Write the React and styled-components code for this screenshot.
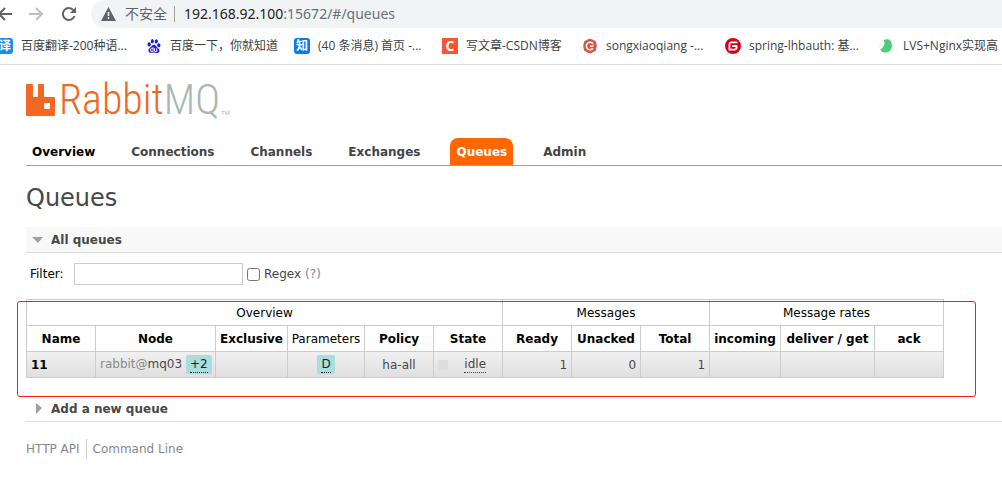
import React from 'react'
import styled, { createGlobalStyle } from 'styled-components'
import { SiBaidu, SiGitee } from 'react-icons/si'

const bookmarks = [
  { icon: 'fanyi', text: '百度翻译-200种语...', width: 149 },
  { icon: 'baidu', text: '百度一下，你就知道', width: 148 },
  { icon: 'zhihu', text: '(40 条消息) 首页 -...', width: 148 },
  { icon: 'csdn', text: '写文章-CSDN博客', width: 140 },
  { icon: 'song', text: 'songxiaoqiang -...', width: 143 },
  { icon: 'gitee', text: 'spring-lhbauth: 基...', width: 154 },
  { icon: 'leaf', text: 'LVS+Nginx实现高', width: 124 },
]

const tabs = ['Overview', 'Connections', 'Channels', 'Exchanges', 'Queues', 'Admin']

const columns = [
  { name: 'Name', width: 69 },
  { name: 'Node', width: 120 },
  { name: 'Exclusive', width: 72 },
  { name: 'Parameters', width: 77, plain: true },
  { name: 'Policy', width: 69 },
  { name: 'State', width: 69 },
  { name: 'Ready', width: 69 },
  { name: 'Unacked', width: 69 },
  { name: 'Total', width: 69 },
  { name: 'incoming', width: 71 },
  { name: 'deliver / get', width: 94 },
  { name: 'ack', width: 69 },
]

const BookmarkIcon = ({ name }) => {
  if (name === 'fanyi') return <Badge $bg="#1b8cf5">译</Badge>
  if (name === 'zhihu') return <Badge $bg="#0a78fa">知</Badge>
  if (name === 'csdn') return <Badge $bg="#fc5531" $square>C</Badge>
  if (name === 'baidu') return <SiBaidu size={14} color="#2319dc" />
  if (name === 'gitee') return <SiGitee size={16} color="#d0021b" />
  if (name === 'song') return (
    <svg width="16" height="16" viewBox="0 0 16 16">
      <path d="M8 .5l3 1.300 3 1.700.8 4.500-.8 4.500-3 1.700-3 1.300-3-1.300-3-1.700L1.200 8 2 3.500l3-1.700z" fill="#dd5540" />
      <path d="M11 5.800A3.700 3.700 0 1 0 11 10.200M8 8h3.500" fill="none" stroke="#fff" strokeWidth="1.500" />
    </svg>
  )
  return (
    <svg width="16" height="16" viewBox="0 0 16 16">
      <circle cx="8" cy="8" r="8" fill="#eefaf2" />
      <path d="M5 2C9 .500 11.500 1.500 12.500 5c1.500 4.500-1 9.500-6 9.500C4 14.500 1.800 13.200 1.500 11.500 3 10.500 4.500 9 5.500 6.500 6 5 5 3.500 5 2z" fill="#4ccb78" />
    </svg>
  )
}

const Logo = () => (
  <LogoLink href="#/" aria-label="RabbitMQ">
    <svg width="29" height="32" viewBox="0 0 29 32">
      <path fillRule="evenodd" fill="#f26822" d="M1 0h5q1 0 1 1v11q0 1 1 1h3q1 0 1-1V1q0-1 1-1h4q1 0 1 1v11q0 1 1 1h9q1 0 1 1v17q0 1-1 1H1q-1 0-1-1V1q0-1 1-1zM19 19q-1 0-1 1v4q0 1 1 1h4q1 0 1-1v-4q0-1-1-1z" />
    </svg>
    <LogoText>Rabbit<LogoGrey>MQ</LogoGrey></LogoText>
    <Trademark>TM</Trademark>
  </LogoLink>
)

const App = () => {
  return (
    <>
      <GlobalStyle />
      <Toolbar>
        <ToolButton aria-label="Back">
          <svg width="16" height="16" viewBox="0 0 16 16"><path d="M15 8H3M8 2L2 8l6 6" fill="none" stroke="#5f6368" strokeWidth="2" /></svg>
        </ToolButton>
        <ToolButton aria-label="Forward">
          <svg width="16" height="16" viewBox="0 0 16 16"><path d="M1 8h12M8 2l6 6-6 6" fill="none" stroke="#bdbfc1" strokeWidth="2" /></svg>
        </ToolButton>
        <ToolButton aria-label="Reload">
          <svg width="16" height="16" viewBox="0 0 16 16"><path d="M13.500 10A6 6 0 1 1 12.500 4.200" fill="none" stroke="#5f6368" strokeWidth="2" /><path d="M15 1v6H9z" fill="#5f6368" /></svg>
        </ToolButton>
        <Address>
          <svg width="15" height="14" viewBox="0 0 15 14"><path d="M7.500 0L15 14H0zM6.700 5v4h1.600V5zM6.700 10.300v1.600h1.600v-1.600z" fill="#5f6368" fillRule="evenodd" /></svg>
          <Insecure>不安全</Insecure>
          <Url>192.168.92.100<UrlRest>:15672/#/queues</UrlRest></Url>
        </Address>
      </Toolbar>
      <Bookmarks>
        {bookmarks.map((b) => (
          <Bookmark key={b.text} href="#" $width={b.width}>
            <IconSlot><BookmarkIcon name={b.icon} /></IconSlot>
            {b.text}
          </Bookmark>
        ))}
      </Bookmarks>

      <Page>
        <Logo />
        <Nav>
          {tabs.map((tab) => (
            <Tab key={tab} href="#" $active={tab === 'Queues'} $dark={tab === 'Overview'}>{tab}</Tab>
          ))}
        </Nav>
        <Title>Queues</Title>

        <SectionHeader $open>
          <Arrow $open />All queues
        </SectionHeader>
        <Filter>
          <FilterLabel htmlFor="filter">Filter:</FilterLabel>
          <FilterInput id="filter" type="text" />
          <Checkbox id="regex" type="checkbox" />
          <RegexLabel htmlFor="regex">Regex</RegexLabel>
          <Help href="#">(?)</Help>
        </Filter>

        <TableArea>
          <Table>
            <colgroup>
              {columns.map((c) => <Col key={c.name} $width={c.width} />)}
            </colgroup>
            <thead>
              <tr>
                <Th colSpan="6" $plain>Overview</Th>
                <Th colSpan="3" $plain>Messages</Th>
                <Th colSpan="3" $plain>Message rates</Th>
              </tr>
              <tr>
                {columns.map((c) => <Th key={c.name} $plain={c.plain}>{c.name}</Th>)}
              </tr>
            </thead>
            <tbody>
              <Row>
                <Td><QueueLink href="#">11</QueueLink></Td>
                <Td><Faint>rabbit@</Faint>mq03 <Tag><abbr>+2</abbr></Tag></Td>
                <Td />
                <Td $align="center"><Tag><abbr>D</abbr></Tag></Td>
                <Td $align="center">ha-all</Td>
                <Td><State><StateBox /><abbr>idle</abbr></State></Td>
                <Td $align="right">1</Td>
                <Td $align="right">0</Td>
                <Td $align="right">1</Td>
                <Td />
                <Td />
                <Td />
              </Row>
            </tbody>
          </Table>
          <Highlight />
        </TableArea>

        <SectionHeader>
          <Arrow />Add a new queue
        </SectionHeader>
        <Footer>
          <FooterLink href="#">HTTP API</FooterLink>
          <FooterLink href="#">Command Line</FooterLink>
        </Footer>
      </Page>
    </>
  )
}

const GlobalStyle = createGlobalStyle`
  * {
    box-sizing: border-box;
  }
  body {
    margin: 0;
    background: #fff;
    color: #484848;
    font: 12px/16px Verdana, "DejaVu Sans", sans-serif;
  }
  a {
    text-decoration: none;
  }
`;

const Toolbar = styled.div`
  display: flex;
  align-items: center;
  height: 28px;
  font-family: "Noto Sans", "Noto Sans CJK SC", sans-serif;
`;

const ToolButton = styled.button`
  display: flex;
  flex: none;
  justify-content: center;
  width: 32px;
  padding: 0;
  border: 0;
  background: none;
  &:first-child {
    width: 22px;
    justify-content: flex-start;
    margin-left: -3px;
  }
  &:nth-child(2) {
    width: 34px;
  }
`;

const Address = styled.div`
  display: flex;
  flex: 1;
  align-items: center;
  height: 28px;
  margin-left: 6px;
  padding-left: 10px;
  border-radius: 14px 0 0 14px;
  background: #f1f3f4;
`;

const Insecure = styled.span`
  margin-left: 9px;
  padding-right: 7px;
  border-right: 1px solid #9aa0a6;
  color: #5f6368;
  font-size: 14px;
  line-height: 16px;
`;

const Url = styled.span`
  margin-left: 9px;
  color: #202124;
  font: 14px/20px "Noto Sans", sans-serif;
`;

const UrlRest = styled.span`
  color: #6b6f73;
`;

const Bookmarks = styled.div`
  display: flex;
  align-items: center;
  height: 37px;
  border-bottom: 1px solid #dadce0;
  font-family: "Open Sans", "Noto Sans CJK SC", sans-serif;
`;

const Bookmark = styled.a`
  display: flex;
  flex: none;
  align-items: center;
  gap: 8px;
  width: ${(p) => p.$width}px;
  color: #3c4043;
  font-size: 12px;
  white-space: nowrap;
  &:first-child {
    margin-left: -3px;
  }
`;

const IconSlot = styled.span`
  display: flex;
  flex: none;
  align-items: center;
  justify-content: center;
  width: 16px;
  height: 16px;
`;

const Badge = styled.span`
  width: 16px;
  height: 16px;
  border-radius: ${(p) => (p.$square ? 0 : 3)}px;
  background: ${(p) => p.$bg};
  color: #fff;
  font-size: ${(p) => (p.$square ? 14 : 12)}px;
  font-weight: bold;
  line-height: 16px;
  text-align: center;
`;

const Page = styled.main`
  padding: 18px 0 0 26px;
`;

const LogoLink = styled.a`
  display: flex;
  align-items: center;
  height: 34px;
`;

const LogoText = styled.span`
  margin-left: 4px;
  color: #f26822;
  font: 300 42px/34px "Roboto Condensed", "Open Sans Condensed", Roboto, sans-serif;
`;

const LogoGrey = styled.span`
  color: #a9b7b1;
`;

const Trademark = styled.span`
  align-self: flex-end;
  margin-left: 1px;
  color: #a9b7b1;
  font: 6px/8px "Liberation Sans", sans-serif;
`;

const Nav = styled.nav`
  display: flex;
  gap: 24px;
  margin-top: 21px;
  border-bottom: 1px solid #ff8c00;
`;

const Tab = styled.a`
  padding: 6px 6px 5px;
  border-radius: 8px 8px 0 0;
  background: ${(p) => (p.$active ? '#ff6600' : 'transparent')};
  color: ${(p) => (p.$active ? '#fff' : p.$dark ? '#000' : '#444')};
  font-weight: bold;
`;

const Title = styled.h1`
  margin: 16px 0 13px;
  font-size: 24px;
  font-weight: normal;
  line-height: 32px;
`;

const SectionHeader = styled.h2`
  display: flex;
  align-items: center;
  gap: 8px;
  height: 26px;
  margin: 0;
  padding-left: 6px;
  border-bottom: 1px solid #ddd;
  background: ${(p) => (p.$open ? '#f8f8f8' : '#fff')};
  font-size: 12px;
`;

const Arrow = styled.span`
  width: 11px;
  height: 11px;
  background: #a0a0a0;
  clip-path: ${(p) => (p.$open ? 'polygon(0 3px, 11px 3px, 6px 9px)' : 'polygon(4px 0, 10px 5px, 4px 11px)')};
`;

const Filter = styled.div`
  display: flex;
  align-items: center;
  margin: 10px 0 14px;
  padding-left: 4px;
`;

const FilterLabel = styled.label`
  width: 44px;
  color: #000;
`;

const FilterInput = styled.input`
  width: 169px;
  height: 22px;
  border: 1px solid #ccc;
`;

const Checkbox = styled.input`
  width: 13px;
  height: 13px;
  margin: 0 4px;
`;

const RegexLabel = styled.label`
  margin-right: 4px;
`;

const Help = styled.a`
  color: #888;
`;

const TableArea = styled.div`
  position: relative;
  padding-bottom: 18px;
`;

const Table = styled.table`
  width: 918px;
  table-layout: fixed;
  border-collapse: collapse;
`;

const Col = styled.col`
  width: ${(p) => p.$width}px;
`;

const Th = styled.th`
  height: 26px;
  padding: 0;
  border: 1px solid #ccc;
  color: #000;
  font-weight: ${(p) => (p.$plain ? 'normal' : 'bold')};
  white-space: nowrap;
`;

const Row = styled.tr`
  background: linear-gradient(#f0f0f0, #dfdfdf);
`;

const Td = styled.td`
  height: 26px;
  padding: 0 4px;
  border: 1px solid #ccc;
  text-align: ${(p) => p.$align || 'left'};
  white-space: nowrap;
`;

const QueueLink = styled.a`
  color: #000;
  font-weight: bold;
`;

const Faint = styled.span`
  color: #888;
`;

const Tag = styled.span`
  display: inline-block;
  padding: 2px 4px 1px;
  border-radius: 2px;
  background: #aadddd;
  color: #222;
  line-height: 15px;
  abbr {
    display: block;
    border-bottom: 1px dotted #222;
  }
`;

const State = styled.div`
  display: flex;
  align-items: center;
  justify-content: space-between;
  padding-right: 12px;
  abbr {
    line-height: 15px;
    border-bottom: 1px dotted #444;
  }
`;

const StateBox = styled.span`
  width: 10px;
  height: 10px;
  background: #ddd;
`;

const Highlight = styled.div`
  position: absolute;
  top: 2px;
  bottom: -1px;
  left: -9px;
  right: 26px;
  border: 1px solid #ff1a0a;
  border-radius: 3px;
  pointer-events: none;
`;

const Footer = styled.footer`
  display: flex;
  gap: 6px;
  padding-top: 17px;
`;

const FooterLink = styled.a`
  color: #888;
  line-height: 20px;
  &:first-child {
    padding-right: 6px;
    border-right: 1px solid #ccc;
  }
`;

export default App
